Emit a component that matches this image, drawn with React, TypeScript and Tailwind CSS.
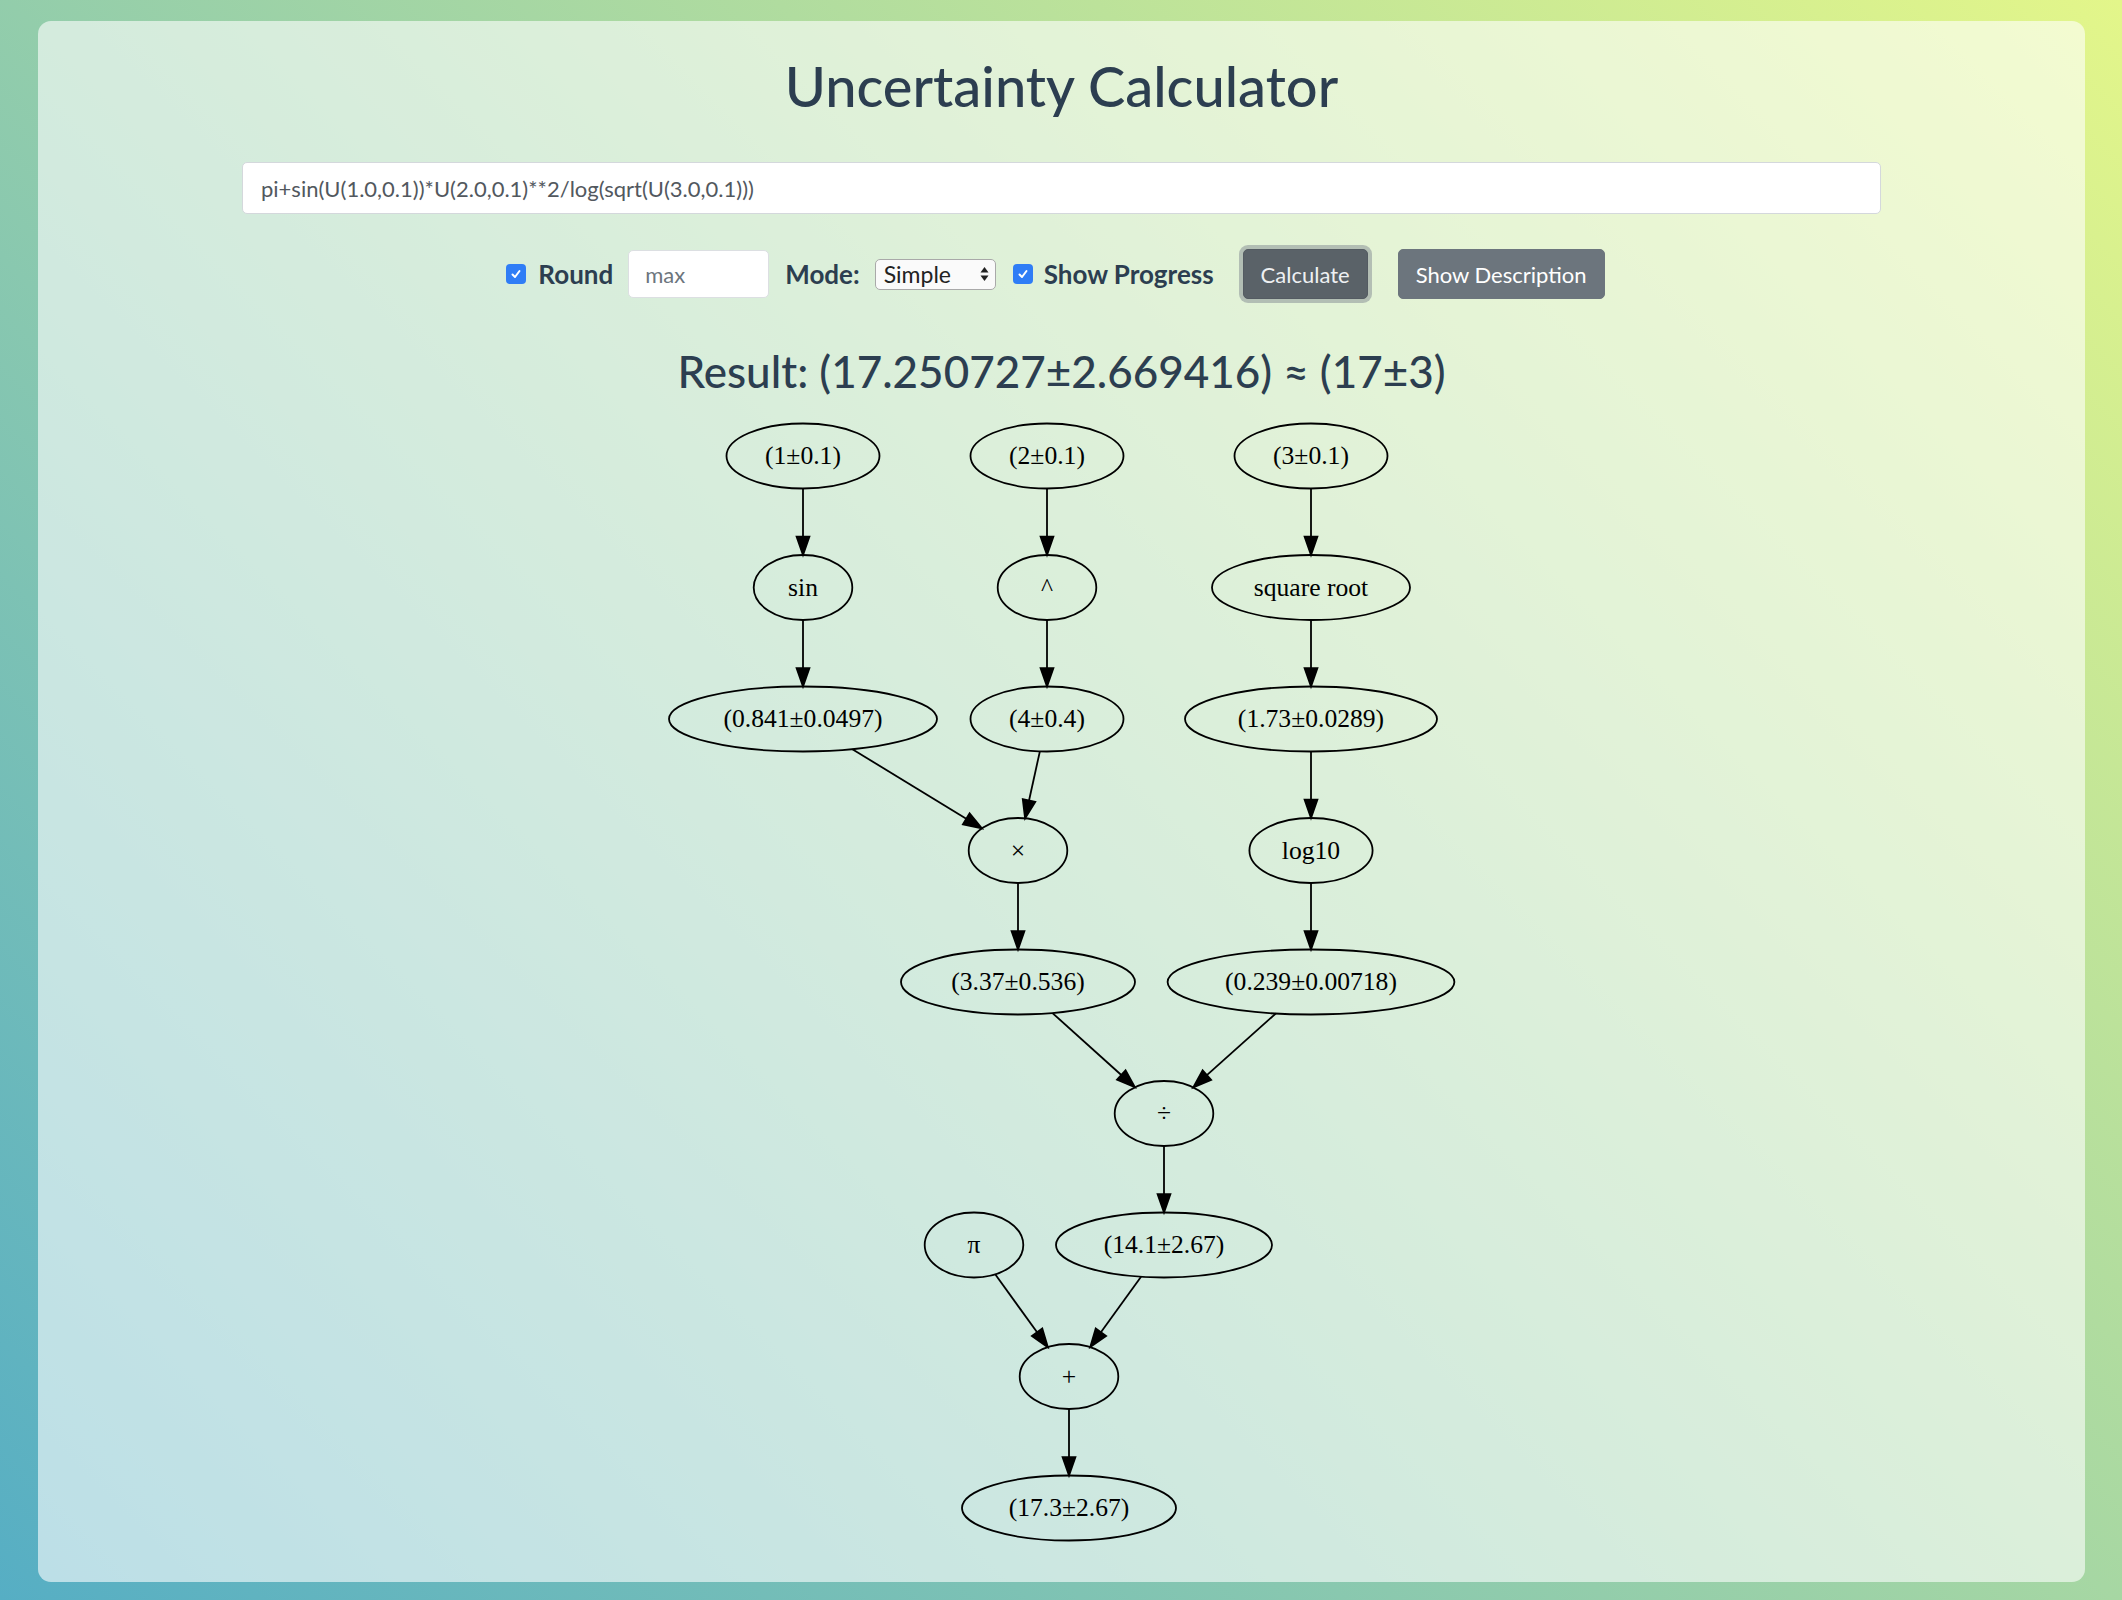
import React from "react";

type N = { id: string; x: number; y: number; rx: number; label: string };

const R = [456, 587.5, 719, 850.5, 982, 1113.5, 1245, 1376.5, 1508];
const RY = 32.5;

const nodes: N[] = [
  { id: "n1", x: 803, y: R[0], rx: 76.5, label: "(1±0.1)" },
  { id: "n2", x: 1047, y: R[0], rx: 76.5, label: "(2±0.1)" },
  { id: "n3", x: 1311, y: R[0], rx: 76.5, label: "(3±0.1)" },
  { id: "sin", x: 803, y: R[1], rx: 49.3, label: "sin" },
  { id: "pow", x: 1047, y: R[1], rx: 49.3, label: "^" },
  { id: "sqrt", x: 1311, y: R[1], rx: 99, label: "square root" },
  { id: "v841", x: 803, y: R[2], rx: 134, label: "(0.841±0.0497)" },
  { id: "v4", x: 1047, y: R[2], rx: 76.5, label: "(4±0.4)" },
  { id: "v173", x: 1311, y: R[2], rx: 126, label: "(1.73±0.0289)" },
  { id: "mul", x: 1018, y: R[3], rx: 49.3, label: "×" },
  { id: "log", x: 1311, y: R[3], rx: 61.6, label: "log10" },
  { id: "v337", x: 1018, y: R[4], rx: 117, label: "(3.37±0.536)" },
  { id: "v239", x: 1311, y: R[4], rx: 143.4, label: "(0.239±0.00718)" },
  { id: "div", x: 1164, y: R[5], rx: 49.3, label: "÷" },
  { id: "pi", x: 974, y: R[6], rx: 49.3, label: "π" },
  { id: "v141", x: 1164, y: R[6], rx: 108, label: "(14.1±2.67)" },
  { id: "add", x: 1069, y: R[7], rx: 49.3, label: "+" },
  { id: "res", x: 1069, y: R[8], rx: 107, label: "(17.3±2.67)" },
];

const edges: [string, string][] = [
  ["n1", "sin"],
  ["n2", "pow"],
  ["n3", "sqrt"],
  ["sin", "v841"],
  ["pow", "v4"],
  ["sqrt", "v173"],
  ["v841", "mul"],
  ["v4", "mul"],
  ["v173", "log"],
  ["mul", "v337"],
  ["log", "v239"],
  ["v337", "div"],
  ["v239", "div"],
  ["div", "v141"],
  ["pi", "add"],
  ["v141", "add"],
  ["add", "res"],
];

const byId: Record<string, N> = Object.fromEntries(nodes.map((n) => [n.id, n]));

function boundary(n: N, dx: number, dy: number) {
  const t = 1 / Math.sqrt((dx / n.rx) ** 2 + (dy / RY) ** 2);
  return [n.x + dx * t, n.y + dy * t];
}

function Edge({ from, to }: { from: string; to: string }) {
  const a = byId[from];
  const b = byId[to];
  const dx = b.x - a.x;
  const dy = b.y - a.y;
  const [sx, sy] = boundary(a, dx, dy);
  const [ex, ey] = boundary(b, -dx, -dy);
  const len = Math.hypot(ex - sx, ey - sy);
  const ux = (ex - sx) / len;
  const uy = (ey - sy) / len;
  const AL = 18.3;
  const AW = 6.4;
  const bx = ex - ux * AL;
  const by = ey - uy * AL;
  const px = -uy;
  const py = ux;
  return (
    <g>
      <line x1={sx} y1={sy} x2={bx} y2={by} stroke="#000" strokeWidth={1.8} />
      <polygon
        points={`${ex},${ey} ${bx + px * AW},${by + py * AW} ${bx - px * AW},${by - py * AW}`}
        fill="#000"
        stroke="#000"
        strokeWidth={1.8}
        strokeLinejoin="miter"
      />
    </g>
  );
}

function Check() {
  return (
    <div className="flex h-[20px] w-[20px] items-center justify-center rounded-[4px] bg-[#2f7df6]">
      <svg width="12" height="12" viewBox="0 0 12 12">
        <path d="M2.5 6.5 L5 9 L9.5 3" stroke="#fff" strokeWidth="2" fill="none" strokeLinecap="round" strokeLinejoin="round" />
      </svg>
    </div>
  );
}

export default function App() {
  return (
    <div
      className="flex h-[1600px] w-full flex-col bg-[linear-gradient(45deg,#56aec4,#e3f68a)] pb-[18px] pl-[38px] pr-[37px] pt-[21px]"
      style={{ fontFamily: "Lato, 'Noto Sans', sans-serif" }}
    >
      <div className="flex flex-1 flex-col items-center rounded-[13px] bg-white/60 pt-[32px]">
        <h1 className="h-[65px] text-[56px] font-medium leading-[65px] text-[#2c3e50]">Uncertainty Calculator</h1>

        <input
          readOnly
          value="pi+sin(U(1.0,0.1))*U(2.0,0.1)**2/log(sqrt(U(3.0,0.1)))"
          className="mt-[44px] h-[52px] w-[1639px] rounded-[5px] border border-[#d4d8dc] bg-white px-[18px] text-[22px] text-[#52585e] outline-none"
        />

        <div className="mt-[31px] flex h-[58px] items-center pr-[12px]">
          <Check />
          <span className="ml-[12px] text-[26px] font-bold text-[#2c3e50]">Round</span>
          <div className="ml-[15px] flex h-[48px] w-[141px] items-center rounded-[5px] border border-[#dcdfe2] bg-white pl-[16px] text-[22px] text-[#6c757d]">
            max
          </div>
          <span className="ml-[16px] text-[26px] font-bold text-[#2c3e50]">Mode:</span>
          <div className="ml-[15px] flex h-[31px] w-[121px] items-center justify-between rounded-[5px] border border-[#a9a9a9] bg-[#fafafa] pl-[8px] pr-[6px] text-[23px] text-[#222]">
            <span>Simple</span>
            <svg width="9" height="16" viewBox="0 0 9 16">
              <path d="M4.5 1 L8.5 6.5 L0.5 6.5 Z" fill="#222" />
              <path d="M4.5 15 L8.5 9.5 L0.5 9.5 Z" fill="#222" />
            </svg>
          </div>
          <div className="ml-[17px]">
            <Check />
          </div>
          <span className="ml-[11px] text-[26px] font-bold text-[#2c3e50]">Show Progress</span>
          <button className="ml-[29px] h-[50px] w-[125px] rounded-[5px] border border-[#545b62] bg-[#5a6268] text-[22px] text-[#eef0f2] shadow-[0_0_0_4px_rgba(130,138,145,0.5)]">
            Calculate
          </button>
          <button className="ml-[30px] h-[50px] w-[207px] rounded-[5px] border border-[#6c757d] bg-[#6c757d] text-[22px] text-white">
            Show Description
          </button>
        </div>

        <div className="mt-[42px] h-[52px] text-[44px] font-medium leading-[52px] text-[#2c3e50]">
          Result: (17.250727±2.669416) ≈ (17±3)
        </div>

        <svg width="801" height="1150" viewBox="0 0 801 1150" className="mt-[3px]">
          <g transform="translate(-661,-400)">
            {edges.map(([f, t]) => (
              <Edge key={f + t} from={f} to={t} />
            ))}
            {nodes.map((n) => (
              <g key={n.id}>
                <ellipse cx={n.x} cy={n.y} rx={n.rx} ry={RY} fill="none" stroke="#000" strokeWidth={1.8} />
                <text
                  x={n.x}
                  y={n.y + 8}
                  textAnchor="middle"
                  fontFamily="'Liberation Serif', 'Times New Roman', serif"
                  fontSize={25.6}
                  fill="#000"
                >
                  {n.label}
                </text>
              </g>
            ))}
          </g>
        </svg>
      </div>
    </div>
  );
}
